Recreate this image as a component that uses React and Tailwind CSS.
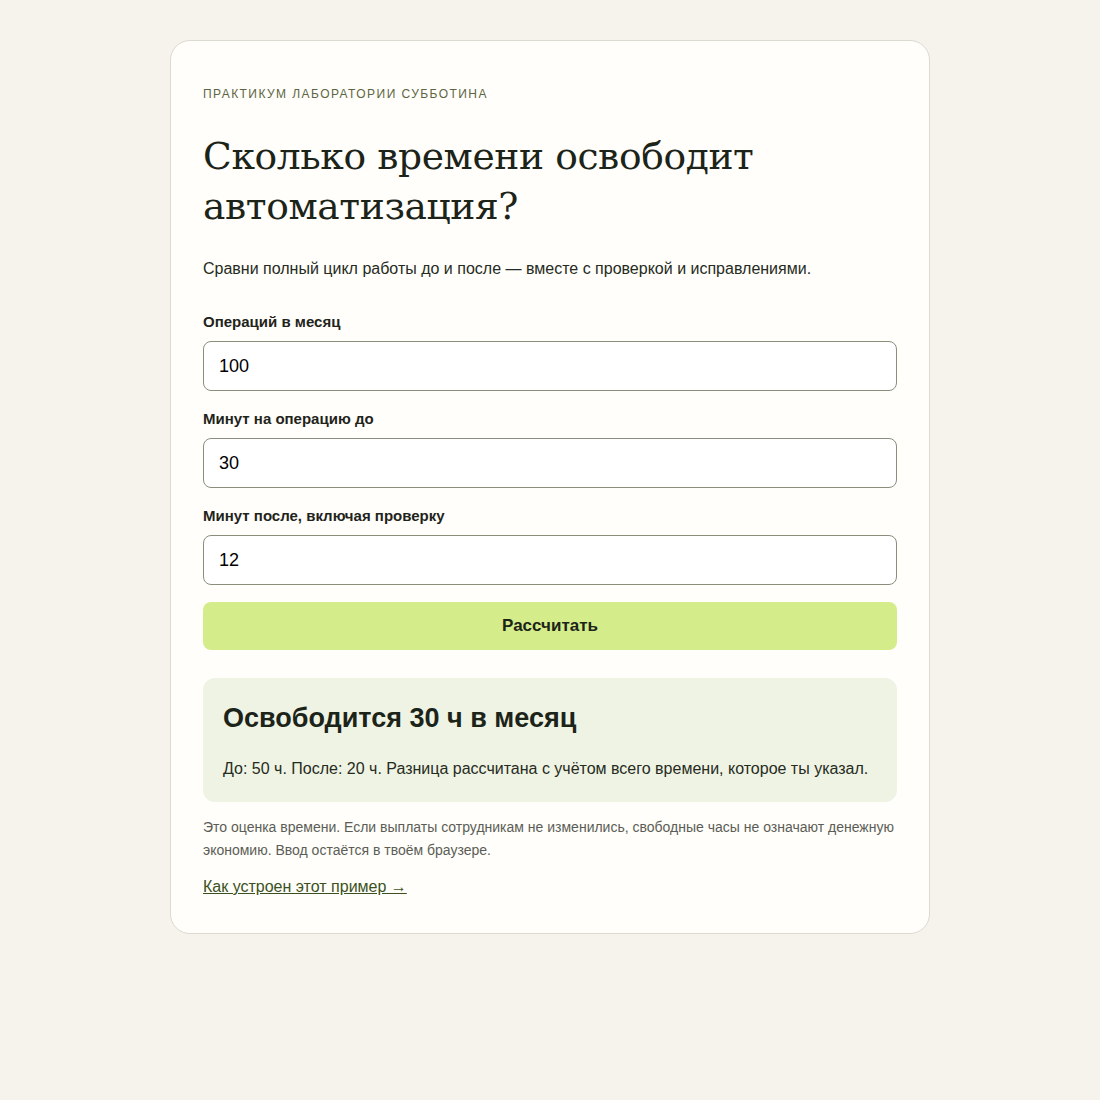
import React, { useState } from 'react';

export default function App() {
  const [ops, setOps] = useState('100');
  const [before, setBefore] = useState('30');
  const [after, setAfter] = useState('12');
  const [result, setResult] = useState({ before: 50, after: 20 });

  const calc = () => {
    const n = parseFloat(ops) || 0;
    const b = Math.round((n * (parseFloat(before) || 0)) / 60);
    const a = Math.round((n * (parseFloat(after) || 0)) / 60);
    setResult({ before: b, after: a });
  };

  const fields = [
    { label: 'Операций в месяц', value: ops, set: setOps },
    { label: 'Минут на операцию до', value: before, set: setBefore },
    { label: 'Минут после, включая проверку', value: after, set: setAfter },
  ];

  return (
    <div className="min-h-screen bg-[#f5f3ec] pt-10 font-['Liberation_Sans',Arial,sans-serif] text-[#1f261c]">
      <div className="mx-auto w-[760px] rounded-[20px] border border-[#dcd9d0] bg-[#fffefa] px-8 pt-[45px] pb-[34px]">
        <div className="text-[12px] uppercase tracking-[0.12em] text-[#5e6542] leading-[16px]">
          Практикум лаборатории Субботина
        </div>

        <h1 className="mt-[29px] font-['DejaVu_Serif',Georgia,serif] text-[37.6px] leading-[50px] text-[#1c2419] tracking-[-0.01em]">
          Сколько времени освободит автоматизация?
        </h1>

        <p className="mt-[26px] text-[16px] leading-[24px] text-[#262b22]">
          Сравни полный цикл работы до и после — вместе с проверкой и исправлениями.
        </p>

        <div className="mt-[30px]">
          {fields.map((f, i) => (
            <div key={i} className={i > 0 ? 'mt-[17px]' : ''}>
              <label className="block text-[15px] font-bold leading-[22px] text-[#1f241b]">{f.label}</label>
              <input
                value={f.value}
                onChange={(e) => f.set(e.target.value)}
                className="mt-[8px] block h-[50px] w-full rounded-[8px] border border-[#8a8f7c] bg-white px-[15px] text-[18px] text-black outline-none"
              />
            </div>
          ))}
        </div>

        <button
          onClick={calc}
          className="mt-[17px] block h-[48px] w-full rounded-[8px] bg-[#d5ec8a] text-[17px] font-bold text-[#1c2419]"
        >
          Рассчитать
        </button>

        <div className="mt-[28px] rounded-[12px] bg-[#eff3e4] px-5 pt-[23px] pb-[21px]">
          <div className="text-[27px] font-bold leading-[34px] text-[#1c2419]">
            Освободится {result.before - result.after} ч в месяц
          </div>
          <p className="mt-[22px] text-[16px] leading-[24px] text-[#262b22]">
            До: {result.before} ч. После: {result.after} ч. Разница рассчитана с учётом всего времени, которое ты указал.
          </p>
        </div>

        <p className="mt-[14px] text-[14px] leading-[23px] text-[#5b5d56]">
          Это оценка времени. Если выплаты сотрудникам не изменились, свободные часы не означают денежную экономию. Ввод остаётся в твоём браузере.
        </p>

        <a href="#" className="mt-[13px] inline-block text-[16px] leading-[24px] text-[#3b5122] underline">
          Как устроен этот пример →
        </a>
      </div>
    </div>
  );
}
